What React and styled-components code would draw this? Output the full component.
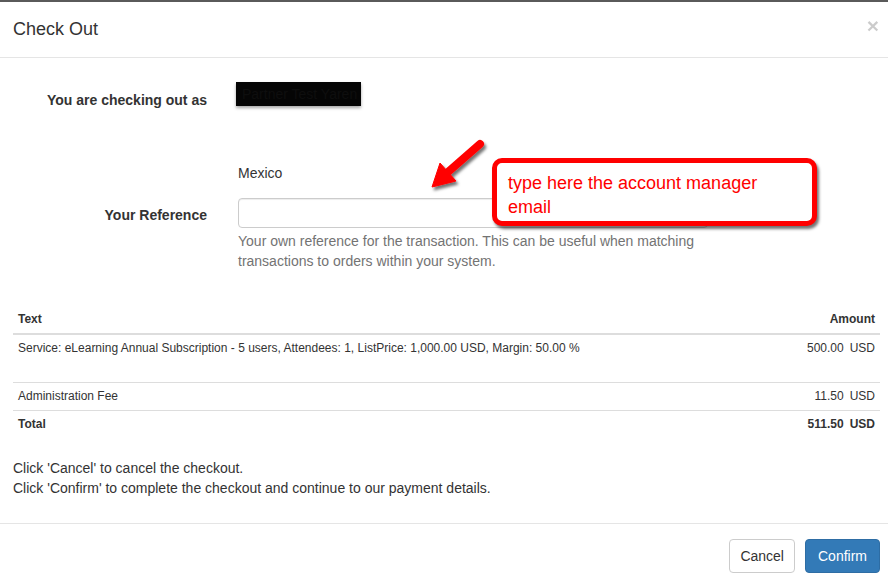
import React from "react";
import styled, { createGlobalStyle } from "styled-components";

const GlobalStyle = createGlobalStyle`
  html, body {
    margin: 0;
    padding: 0;
    background: #fff;
  }
  body {
    font-family: "Liberation Sans", Arial, sans-serif;
    font-size: 14px;
    color: #333;
  }
`;

const Modal = styled.div`
  position: relative;
  width: 888px;
  height: 587px;
  background: #fff;
  border-top: 2px solid #5a5a5a;
  box-sizing: border-box;
  overflow: hidden;
`;

const Header = styled.div`
  height: 55px;
  padding: 0 13px;
  display: flex;
  align-items: center;
  justify-content: space-between;
  border-bottom: 1px solid #e5e5e5;
`;

const Title = styled.h4`
  margin: 0;
  font-size: 18px;
  font-weight: normal;
  color: #333;
`;

const Close = styled.button`
  border: 0;
  background: none;
  padding: 0;
  margin-right: -4px;
  margin-top: -8px;
  font-family: "Liberation Sans", Arial, sans-serif;
  font-size: 21px;
  font-weight: bold;
  line-height: 1;
  color: #000;
  opacity: 0.2;
  cursor: pointer;
`;

const Body = styled.div`
  padding: 24px 8px 15px 13px;
`;

const FormRow = styled.div`
  display: grid;
  grid-template-columns: 194px 470px;
  column-gap: 31px;
  margin-top: ${(p) => p.top || 0}px;
`;

const Label = styled.label`
  text-align: right;
  font-weight: bold;
  line-height: 20px;
  padding-top: ${(p) => p.pad || 0}px;
`;

const Redacted = styled.div`
  width: 125px;
  height: 24px;
  margin-left: -2px;
  background: #050505;
  color: #0e0e0e;
  font-size: 14px;
  line-height: 24px;
  padding-left: 6px;
  box-sizing: border-box;
  white-space: nowrap;
  overflow: hidden;
  box-shadow: 0 2px 3px rgba(0, 0, 0, 0.35);
`;

const Static = styled.div`
  line-height: 20px;
  margin-bottom: 15px;
`;

const Input = styled.input`
  display: block;
  width: 100%;
  height: 30px;
  box-sizing: border-box;
  border: 1px solid #ccc;
  border-radius: 4px;
  box-shadow: inset 0 1px 1px rgba(0, 0, 0, 0.075);
  padding: 6px 12px;
  font: inherit;
`;

const Help = styled.p`
  margin: 3px 0 0;
  color: #737373;
  line-height: 20px;
`;

const Table = styled.table`
  width: 100%;
  margin: 35px 0 20px;
  border-collapse: collapse;
  font-size: 12px;
`;

const Th = styled.th`
  padding: 5px;
  line-height: 17px;
  text-align: ${(p) => (p.right ? "right" : "left")};
  border-bottom: 2px solid #ddd;
`;

const Td = styled.td`
  padding: 5px 5px ${(p) => (p.tall ? 25 : 5)}px;
  line-height: 17px;
  vertical-align: top;
  text-align: ${(p) => (p.right ? "right" : "left")};
  font-weight: ${(p) => (p.bold ? "bold" : "normal")};
  border-top: ${(p) => (p.first ? "0" : "1px solid #ddd")};
`;

const Currency = styled.span`
  margin-left: 6px;
`;

const Note = styled.p`
  margin: 0 0 10px;
  line-height: 20px;
`;

const Footer = styled.div`
  border-top: 1px solid #e5e5e5;
  padding: 15px 8px 15px 15px;
  display: flex;
  justify-content: flex-end;
  gap: 10px;
`;

const Button = styled.button`
  height: 34px;
  padding: 6px ${(p) => (p.primary ? 12 : 10)}px;
  font-family: "Liberation Sans", Arial, sans-serif;
  font-size: 14px;
  border-radius: 4px;
  cursor: pointer;
  border: 1px solid ${(p) => (p.primary ? "#2e6da4" : "#ccc")};
  background: ${(p) => (p.primary ? "#337ab7" : "#fff")};
  color: ${(p) => (p.primary ? "#fff" : "#333")};
`;

const Callout = styled.div`
  position: absolute;
  left: 492px;
  top: 156px;
  width: 325px;
  height: 68px;
  box-sizing: border-box;
  border: 5px solid #ff0000;
  border-radius: 10px;
  background: #fff;
  box-shadow: 2px 3px 3px rgba(0, 0, 0, 0.55);
  padding: 8px 11px;
  color: #ff0000;
  font-size: 18px;
  line-height: 24px;
`;

const ArrowSvg = styled.svg`
  position: absolute;
  left: 420px;
  top: 128px;
  width: 80px;
  height: 70px;
  overflow: visible;
`;

function Arrow() {
  return (
    <ArrowSvg viewBox="0 0 80 70">
      <defs>
        <filter id="arrowShadow" x="-30%" y="-30%" width="160%" height="160%">
          <feDropShadow dx="2" dy="3" stdDeviation="1.5" floodColor="#000" floodOpacity="0.55" />
        </filter>
      </defs>
      <g filter="url(#arrowShadow)" fill="#ff0000" stroke="#ff0000">
        <line x1="60" y1="14" x2="28" y2="42" strokeWidth="8" strokeLinecap="round" />
        <polygon points="12,57 20,33 36,51" strokeWidth="1" strokeLinejoin="round" />
      </g>
    </ArrowSvg>
  );
}

const rows = [
  {
    text: "Service: eLearning Annual Subscription - 5 users, Attendees: 1, ListPrice: 1,000.00 USD, Margin: 50.00 %",
    amount: "500.00",
    tall: true,
  },
  { text: "Administration Fee", amount: "11.50" },
  { text: "Total", amount: "511.50", bold: true },
];

export default function App() {
  return (
    <>
      <GlobalStyle />
      <Modal>
        <Header>
          <Title>Check Out</Title>
          <Close>×</Close>
        </Header>
        <Body>
          <FormRow>
            <Label pad={8}>You are checking out as</Label>
            <Redacted>Partner Test Yaren</Redacted>
          </FormRow>
          <FormRow top={53}>
            <span />
            <Static>Mexico</Static>
          </FormRow>
          <FormRow>
            <Label pad={7}>Your Reference</Label>
            <div>
              <Input type="text" />
              <Help>
                Your own reference for the transaction. This can be useful when matching
                transactions to orders within your system.
              </Help>
            </div>
          </FormRow>
          <Table>
            <thead>
              <tr>
                <Th>Text</Th>
                <Th right>Amount</Th>
              </tr>
            </thead>
            <tbody>
              {rows.map((r, i) => (
                <tr key={r.text}>
                  <Td first={i === 0} tall={r.tall} bold={r.bold}>
                    {r.text}
                  </Td>
                  <Td first={i === 0} tall={r.tall} bold={r.bold} right>
                    {r.amount}
                    <Currency>USD</Currency>
                  </Td>
                </tr>
              ))}
            </tbody>
          </Table>
          <Note>
            Click 'Cancel' to cancel the checkout.
            <br />
            Click 'Confirm' to complete the checkout and continue to our payment details.
          </Note>
        </Body>
        <Footer>
          <Button>Cancel</Button>
          <Button primary>Confirm</Button>
        </Footer>
        <Arrow />
        <Callout>
          type here the account manager
          <br />
          email
        </Callout>
      </Modal>
    </>
  );
}
